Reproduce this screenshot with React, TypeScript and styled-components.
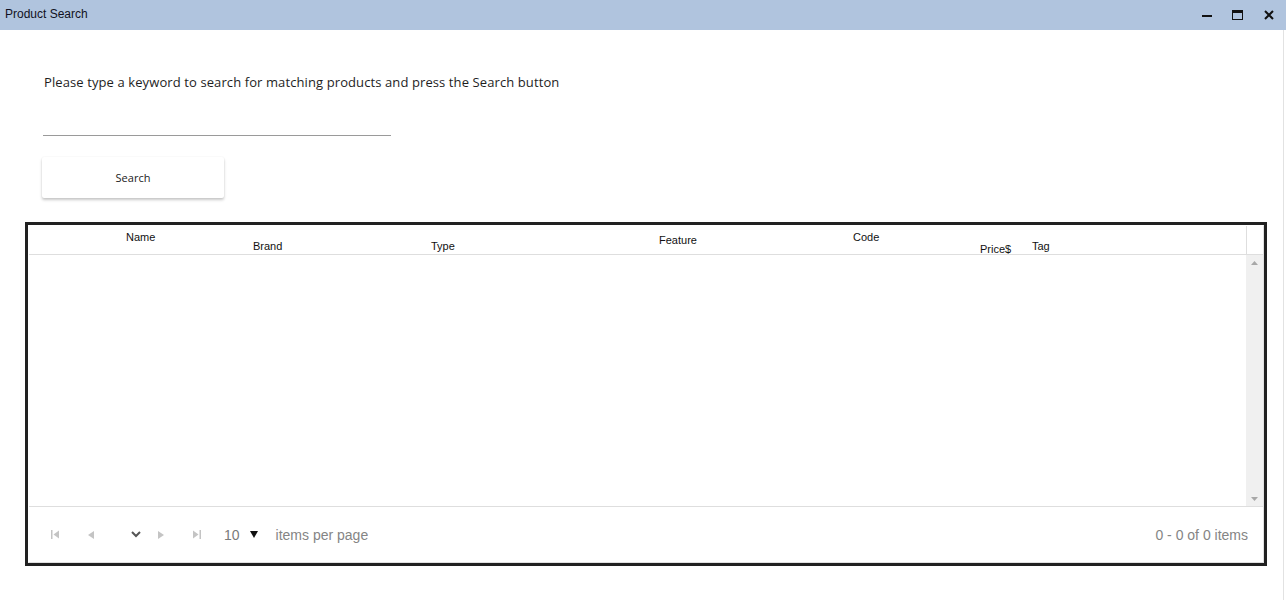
import React from "react";
import styled, { createGlobalStyle } from "styled-components";

const GlobalStyle = createGlobalStyle`
  html, body {
    margin: 0;
    padding: 0;
    background: #ffffff;
  }
  * {
    box-sizing: border-box;
  }
`;

const Window = styled.div`
  width: 1286px;
  height: 600px;
  display: flex;
  flex-direction: column;
  background: #ffffff;
  overflow: hidden;
`;

const TitleBar = styled.div`
  height: 30px;
  flex-shrink: 0;
  display: flex;
  align-items: center;
  justify-content: space-between;
  padding: 0 2px 2px 5px;
  background: #b0c4de;
`;

const Title = styled.span`
  font-family: "Liberation Sans", Arial, sans-serif;
  font-size: 12px;
  color: #111122;
`;

const Controls = styled.div`
  display: flex;
  align-items: center;
  padding-top: 1px;
`;

const ControlButton = styled.div`
  width: 31px;
  height: 20px;
  display: flex;
  align-items: center;
  justify-content: center;
`;

const Content = styled.div`
  flex: 1;
  width: 1284px;
  border-right: 1px solid #e2e2e2;
  display: flex;
  flex-direction: column;
`;

const Form = styled.div`
  display: flex;
  flex-direction: column;
  align-items: flex-start;
  padding-left: 42px;
`;

const Prompt = styled.p`
  margin: 43px 0 0 2px;
  font-family: "Open Sans", "Noto Sans", sans-serif;
  font-size: 13px;
  letter-spacing: 0.1px;
  line-height: 18px;
  color: #1e1e1e;
`;

const KeywordInput = styled.input`
  width: 348px;
  height: 30px;
  margin: 15px 0 0 1px;
  padding: 0;
  border: none;
  border-bottom: 1px solid #9a9a9a;
  outline: none;
  background: transparent;
  font-family: "Open Sans", sans-serif;
  font-size: 13px;
`;

const SearchButton = styled.button`
  width: 182px;
  height: 41px;
  margin-top: 21px;
  border: none;
  border-radius: 2px;
  background: #ffffff;
  box-shadow: 0 2px 3px rgba(0, 0, 0, 0.22), 0 0 2px rgba(0, 0, 0, 0.06);
  font-family: "Open Sans", "Noto Sans", sans-serif;
  font-size: 11px;
  color: #222222;
  cursor: pointer;
`;

const Grid = styled.div`
  width: 1242px;
  height: 344px;
  margin: 24px 0 0 25px;
  border: 3px solid #212121;
`;

const GridInner = styled.div`
  height: 100%;
  display: flex;
  flex-direction: column;
  border: 1px solid #e0e0e0;
  border-left-color: #ffffff;
  border-top-color: #ffffff;
`;

const HeaderRow = styled.div`
  height: 29px;
  flex-shrink: 0;
  display: flex;
  border-bottom: 1px solid #dedede;
`;

const HeaderCells = styled.div`
  flex: 1;
  display: flex;
  padding-left: 97px;
`;

const HeaderCell = styled.div<{ $w: number; $top: number }>`
  width: ${(p) => p.$w}px;
  flex-shrink: 0;
  padding-top: ${(p) => p.$top}px;
  font-family: "Liberation Sans", Arial, sans-serif;
  font-size: 11px;
  line-height: 13px;
  color: #111111;
  white-space: nowrap;
`;

const ScrollHeader = styled.div`
  width: 17px;
  border-left: 1px solid #dedede;
`;

const Body = styled.div`
  height: 251px;
  flex-shrink: 0;
  display: flex;
`;

const Rows = styled.div`
  flex: 1;
`;

const ScrollTrack = styled.div`
  width: 17px;
  background: #f0f0f0;
  display: flex;
  flex-direction: column;
  justify-content: space-between;
  align-items: center;
  padding: 6px 0 5px;
`;

const Footer = styled.div`
  flex: 1;
  display: flex;
  align-items: center;
  justify-content: space-between;
  border-top: 1px solid #dedede;
  padding-right: 15px;
`;

const Pager = styled.div`
  display: flex;
  align-items: center;
`;

const PagerItem = styled.div<{ $gap: number }>`
  margin-left: ${(p) => p.$gap}px;
  display: flex;
  align-items: center;
`;

const PageSize = styled.span`
  font-family: "Liberation Sans", Arial, sans-serif;
  font-size: 14px;
  color: #7a7a7a;
`;

const PagerText = styled.span`
  font-family: "Liberation Sans", Arial, sans-serif;
  font-size: 14px;
  color: #858585;
`;

const disabled = "#c4c4c4";

const columns = [
  { label: "Name", w: 127, top: 5 },
  { label: "Brand", w: 178, top: 14 },
  { label: "Type", w: 228, top: 14 },
  { label: "Feature", w: 194, top: 8 },
  { label: "Code", w: 127, top: 5 },
  { label: "Price$", w: 52, top: 17 },
  { label: "Tag", w: 100, top: 14 },
];

export default function App() {
  return (
    <>
      <GlobalStyle />
      <Window>
        <TitleBar>
          <Title>Product Search</Title>
          <Controls>
            <ControlButton>
              <svg width="10" height="10" viewBox="0 0 10 10">
                <rect x="0" y="5" width="10" height="2" fill="#111" />
              </svg>
            </ControlButton>
            <ControlButton>
              <svg width="11" height="10" viewBox="0 0 11 10">
                <rect x="0.5" y="0.5" width="10" height="9" fill="none" stroke="#111" />
                <rect x="0" y="0" width="11" height="3" fill="#111" />
              </svg>
            </ControlButton>
            <ControlButton>
              <svg width="10" height="10" viewBox="0 0 10 10">
                <path d="M1 1 L9 9 M9 1 L1 9" stroke="#111" strokeWidth="2" />
              </svg>
            </ControlButton>
          </Controls>
        </TitleBar>
        <Content>
          <Form>
            <Prompt>Please type a keyword to search for matching products and press the Search button</Prompt>
            <KeywordInput />
            <SearchButton>Search</SearchButton>
          </Form>
          <Grid>
            <GridInner>
              <HeaderRow>
                <HeaderCells>
                  {columns.map((c) => (
                    <HeaderCell key={c.label} $w={c.w} $top={c.top}>
                      {c.label}
                    </HeaderCell>
                  ))}
                </HeaderCells>
                <ScrollHeader />
              </HeaderRow>
              <Body>
                <Rows />
                <ScrollTrack>
                  <svg width="7" height="4" viewBox="0 0 7 4">
                    <polygon points="3.5,0 7,4 0,4" fill="#a8a8a8" />
                  </svg>
                  <svg width="7" height="4" viewBox="0 0 7 4">
                    <polygon points="0,0 7,0 3.5,4" fill="#a8a8a8" />
                  </svg>
                </ScrollTrack>
              </Body>
              <Footer>
                <Pager>
                  <PagerItem $gap={22}>
                    <svg width="8" height="9" viewBox="0 0 8 9">
                      <rect x="0" y="0" width="1.5" height="9" fill={disabled} />
                      <polygon points="8,0.5 2.5,4.5 8,8.5" fill={disabled} />
                    </svg>
                  </PagerItem>
                  <PagerItem $gap={29}>
                    <svg width="6" height="8" viewBox="0 0 6 8">
                      <polygon points="6,0 0,4 6,8" fill={disabled} />
                    </svg>
                  </PagerItem>
                  <PagerItem $gap={37}>
                    <svg width="10" height="7" viewBox="0 0 10 7">
                      <path d="M1 1 L5 5 L9 1" fill="none" stroke="#555" strokeWidth="2" />
                    </svg>
                  </PagerItem>
                  <PagerItem $gap={17}>
                    <svg width="6" height="8" viewBox="0 0 6 8">
                      <polygon points="0,0 6,4 0,8" fill={disabled} />
                    </svg>
                  </PagerItem>
                  <PagerItem $gap={29}>
                    <svg width="8" height="9" viewBox="0 0 8 9">
                      <polygon points="0,0.5 5.5,4.5 0,8.5" fill={disabled} />
                      <rect x="6.5" y="0" width="1.5" height="9" fill={disabled} />
                    </svg>
                  </PagerItem>
                  <PagerItem $gap={23}>
                    <PageSize>10</PageSize>
                  </PagerItem>
                  <PagerItem $gap={10}>
                    <svg width="8" height="7" viewBox="0 0 8 7">
                      <polygon points="0,0 8,0 4,7" fill="#111" />
                    </svg>
                  </PagerItem>
                  <PagerItem $gap={18}>
                    <PagerText>items per page</PagerText>
                  </PagerItem>
                </Pager>
                <PagerText>0 - 0 of 0 items</PagerText>
              </Footer>
            </GridInner>
          </Grid>
        </Content>
      </Window>
    </>
  );
}
